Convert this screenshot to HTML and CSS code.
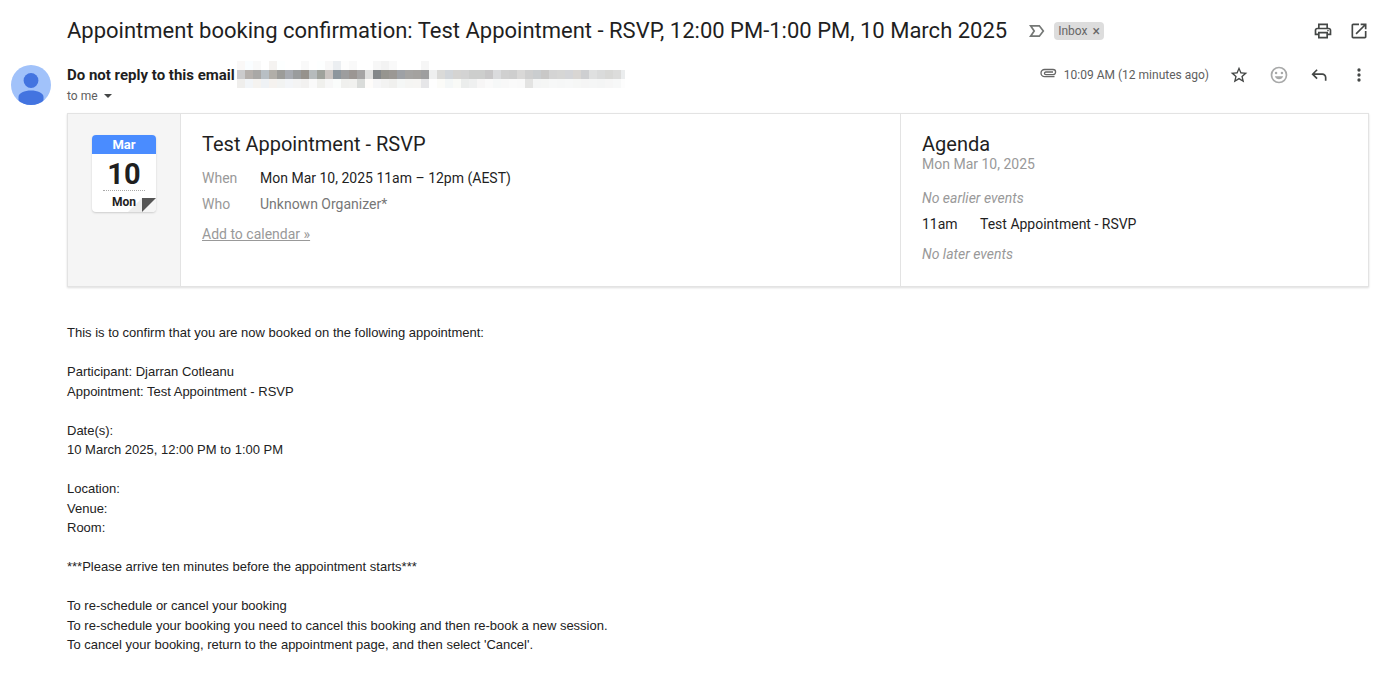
FILE: index.html
```html
<!DOCTYPE html>
<html lang="en">
<head>
    <meta charset="UTF-8">
    <meta name="viewport" content="width=device-width, initial-scale=1.0">
    <title>Appointment booking confirmation</title>
    <link rel="stylesheet" href="styles.css">
</head>
<body>
    <header class="subject-bar">
        <h1>Appointment booking confirmation: Test Appointment - RSVP, 12:00 PM-1:00 PM, 10 March 2025</h1>
        <button class="icon-btn importance" aria-label="Importance marker">
            <svg width="16" height="14" viewBox="0 0 16 14" fill="none" stroke="#747775" stroke-width="1.7">
                <path d="M1.6 1.8h8.7L14.3 7l-4 5.2H1.6L5.2 7z"/>
            </svg>
        </button>
        <span class="label">Inbox <button class="label-remove" aria-label="Remove label">×</button></span>
        <div class="subject-actions">
            <button class="icon-btn" aria-label="Print all">
                <svg width="20" height="20" viewBox="0 0 24 24" fill="#444746">
                    <path d="M19 8h-1V3H6v5H5c-1.66 0-3 1.34-3 3v6h4v4h12v-4h4v-6c0-1.66-1.34-3-3-3zM8 5h8v3H8V5zm8 14H8v-4h8v4zm2-4v-2H6v2H4v-4c0-.55.45-1 1-1h14c.55 0 1 .45 1 1v4h-2z"/>
                    <circle cx="18" cy="11.5" r="1"/>
                </svg>
            </button>
            <button class="icon-btn" aria-label="In new window">
                <svg width="20" height="20" viewBox="0 0 24 24" fill="#444746">
                    <path d="M19 19H5V5h7V3H5c-1.11 0-2 .9-2 2v14c0 1.1.89 2 2 2h14c1.1 0 2-.9 2-2v-7h-2v7zM14 3v2h3.59l-9.83 9.83 1.41 1.41L19 6.41V10h2V3h-7z"/>
                </svg>
            </button>
        </div>
    </header>

    <section class="sender-bar">
        <svg class="avatar" width="40" height="40" viewBox="0 0 40 40">
            <defs>
                <clipPath id="avatar-clip"><circle cx="20" cy="20" r="20"/></clipPath>
            </defs>
            <g clip-path="url(#avatar-clip)">
                <rect width="40" height="40" fill="#a1c2fa"/>
                <circle cx="20" cy="15.5" r="7.4" fill="#4374e0"/>
                <path d="M7.5 42V32c0-4 6-6.500 12.500-6.500S32.500 28 32.500 32v10z" fill="#4374e0"/>
            </g>
        </svg>
        <div class="sender">
            <div class="sender-name">
                <strong>Do not reply to this email</strong>
                <svg id="redacted" width="388" height="27" viewBox="0 0 388 27" shape-rendering="crispEdges" aria-hidden="true"></svg>
            </div>
            <button class="recipient">to me
                <svg width="8" height="4" viewBox="0 0 8 4" fill="#444746"><path d="M0 0h8L4 4z"/></svg>
            </button>
        </div>
        <div class="message-actions">
            <svg class="clip" width="18" height="12" viewBox="0 0 18 12" fill="none" stroke="#666666" stroke-width="1.3">
                <path d="M15.500 8.700H5.600a3.600 3.600 0 0 1 0-7.200H14a2.600 2.600 0 0 1 0 5.200H6.800a1.300 1.300 0 0 1 0-2.700H14"/>
            </svg>
            <time>10:09 AM (12 minutes ago)</time>
            <button class="icon-btn" aria-label="Star">
                <svg width="20" height="20" viewBox="0 0 24 24" fill="#444746">
                    <path d="M22 9.240l-7.190-.62L12 2 9.190 8.630 2 9.240l5.460 4.730L5.820 21 12 17.270 18.180 21l-1.630-7.030L22 9.240zM12 15.400l-3.760 2.270 1-4.280-3.320-2.880 4.380-.38L12 6.100l1.710 4.040 4.380.38-3.320 2.880 1 4.280L12 15.400z"/>
                </svg>
            </button>
            <button class="icon-btn" aria-label="Add reaction">
                <svg width="20" height="20" viewBox="0 0 24 24" fill="#a8a9a9">
                    <path d="M12 2a10 10 0 1 0 0 20 10 10 0 0 0 0-20zm0 18a8 8 0 1 1 0-16 8 8 0 0 1 0 16z"/>
                    <circle cx="8.500" cy="9.500" r="1.500"/>
                    <circle cx="15.500" cy="9.500" r="1.500"/>
                    <path d="M7 13.500h10a5.300 5.300 0 0 1-10 0z"/>
                </svg>
            </button>
            <button class="icon-btn" aria-label="Reply">
                <svg width="20" height="20" viewBox="0 0 24 24" fill="#444746">
                    <path d="M19 19v-4c0-1.650-1.350-3-3-3H6.830l3.580 3.590L9 17l-6-6 6-6 1.410 1.410L6.830 10H16c2.760 0 5 2.240 5 5v4h-2z"/>
                </svg>
            </button>
            <button class="icon-btn" aria-label="More">
                <svg width="20" height="20" viewBox="0 0 24 24" fill="#444746">
                    <circle cx="12" cy="6" r="2"/><circle cx="12" cy="12" r="2"/><circle cx="12" cy="18" r="2"/>
                </svg>
            </button>
        </div>
    </section>

    <section class="event-card">
        <div class="event-date">
            <div class="calendar">
                <div class="month">Mar</div>
                <div class="day">10</div>
                <div class="weekday">Mon</div>
                <svg class="fold" width="28" height="14" viewBox="0 0 28 14">
                    <path d="M0 14L14 0v14z" fill="#eeeeee"/>
                    <path d="M14 14L28 0v14z" fill="#f5f5f5"/>
                    <path d="M14 0h14L14 14z" fill="#555555"/>
                </svg>
            </div>
        </div>
        <div class="event-info">
            <h2>Test Appointment - RSVP</h2>
            <dl>
                <dt>When</dt>
                <dd>Mon Mar 10, 2025 11am – 12pm (AEST)</dd>
                <dt>Who</dt>
                <dd class="organizer">Unknown Organizer*</dd>
            </dl>
            <a href="#">Add to calendar »</a>
        </div>
        <div class="agenda">
            <h2>Agenda</h2>
            <p class="agenda-date">Mon Mar 10, 2025</p>
            <p class="no-events">No earlier events</p>
            <p class="agenda-event"><span class="agenda-time">11am</span>Test Appointment - RSVP</p>
            <p class="no-events">No later events</p>
        </div>
    </section>

    <main class="message">
        <p>This is to confirm that you are now booked on the following appointment:</p>
        <p>Participant: Djarran Cotleanu<br>Appointment: Test Appointment - RSVP</p>
        <p>Date(s):<br>10 March 2025, 12:00 PM to 1:00 PM</p>
        <p>Location:<br>Venue:<br>Room:</p>
        <p>***Please arrive ten minutes before the appointment starts***</p>
        <p>To re-schedule or cancel your booking<br>To re-schedule your booking you need to cancel this booking and then re-book a new session.<br>To cancel your booking, return to the appointment page, and then select 'Cancel'.</p>
    </main>

    <script>
        // Mosaic over the sender's address, one colour per 8x9 block
        const rows = [
            "faf8f7 fafdff f9f9f9 ffffff f5f3f1 fdffff ffffff ffffff f9f9f9 ffffff fdffff f8f8f8 ebeef1 fdfdfd f9f9f9 ffffff ffffff f7f7f7 f3f3f3 f9f9f9 ffffff ffffff ffffff f6f6f6",
            "cbcbcc b5b0ac a9a8a6 b8bfc4 b1aea8 9c9c99 a7aab0 9a9c9d 96928c b6bbbc 9fa29c cac4c1 8d969d 9d9d9e 9b9693 a5a4a4 e0e0df 838789 96958f 9b9894 9ea1a5 a5a4a2 a4a29f 9e9e9f eeefef dadad8 d2d6da d5d4d2 d3d3d3 cdcecd cdcecd c8c7c8 dadbdd d0d0d0 cecece d9d8d7 cfcfcf cacdcf c9c8c7 d4d4d4 d6d6d5 d4d5d8 d9d6d3 cecfd1 dfe0e0 dadbdb d8d8d6 dcdcdb ebedee",
            "efeeec f2f5f8 f5f3f0 eff2f5 f5f2ef f2f3f2 f3f5f8 f4f4f4 f2f1f0 fafafa f0f0ed f7f7f7 fafcfb f0f0ee f1f1ef dadcda fefcfa f6f6f7 f3f3f2 f0f0ee f5f7f6 f5f5f3 f6f5f3 e6e6e8 fefefe fbfbf8 f4f7f7 f9faf7 ebedec eff0f0 f7f6f6 fafafa f6f8f8 f8f8f8 fafafa f9f9f9 e3e3e2 f4f5f5 f5f6f5 f7f8f8 f6f7f7 f7f8f8 f6f7f6 f5f5f5 f5f6f6 f4f5f5 f6f6f6 f7f8f8 fdfdfd"
        ];
        const redacted = document.getElementById("redacted");
        rows.forEach((row, y) => {
            row.split(" ").forEach((color, x) => {
                const block = document.createElementNS("http://www.w3.org/2000/svg", "rect");
                block.setAttribute("x", x * 8);
                block.setAttribute("y", y * 9);
                block.setAttribute("width", 8);
                block.setAttribute("height", 9);
                block.setAttribute("fill", "#" + color);
                redacted.appendChild(block);
            });
        });
    </script>
</body>
</html>
```
FILE: styles.css
```css
* {
    box-sizing: border-box;
}
body {
    margin: 0;
    padding: 12px 12px 20px 11px;
    background-color: #ffffff;
    color: #1f1f1f;
    font-family: Roboto, sans-serif;
    font-size: 14px;
}
h1, h2, p, dl, dd {
    margin: 0;
}
h1, h2 {
    font-weight: 400;
}
button {
    padding: 0;
    border: none;
    background: none;
    color: inherit;
    font: inherit;
    cursor: pointer;
}
svg {
    display: block;
    flex-shrink: 0;
}

.icon-btn {
    display: flex;
    align-items: center;
    justify-content: center;
    width: 20px;
    height: 20px;
}

.subject-bar {
    display: flex;
    align-items: center;
    height: 38px;
    padding-left: 56px;
}
.subject-bar h1 {
    font-size: 22px;
    line-height: 28px;
}
.importance {
    margin: 0 7px 0 20px;
}
.label {
    display: flex;
    align-items: center;
    gap: 5px;
    height: 18px;
    padding: 0 4px;
    border-radius: 4px;
    background-color: #dddddd;
    color: #666666;
    font-size: 12px;
}
.label-remove {
    font-size: 14px;
}
.subject-actions {
    display: flex;
    gap: 16px;
    margin-left: auto;
}

.sender-bar {
    display: flex;
    align-items: flex-start;
    height: 63px;
    padding-top: 11px;
}
.avatar {
    margin-top: 4px;
}
.sender {
    flex: 1;
    margin-left: 16px;
}
.sender-name {
    display: flex;
    align-items: center;
    gap: 2px;
    height: 27px;
    font-size: 15px;
}
.recipient {
    display: flex;
    align-items: center;
    gap: 6px;
    color: #5e5e5e;
    font-size: 12px;
    line-height: 16px;
}
.message-actions {
    display: flex;
    align-items: center;
    gap: 20px;
    height: 28px;
    color: #5e5e5e;
    font-size: 12px;
}
.message-actions .clip {
    margin: 0 -13px 2px 0;
}

.event-card {
    display: grid;
    grid-template-columns: 112px 20fr 13fr;
    min-height: 174px;
    margin-left: 56px;
    border: 1px solid #e3e3e3;
    box-shadow: 0 1px 2px #dddddd;
    line-height: 20px;
}
.event-date {
    padding: 21px 24px;
    background-color: #f5f5f5;
}
.calendar {
    position: relative;
    height: 77px;
    border-radius: 4px;
    background-color: #ffffff;
    box-shadow: 0 1px 2px #cccccc;
    font-weight: 700;
    text-align: center;
    overflow: hidden;
}
.fold {
    position: absolute;
    right: 0;
    bottom: 0;
}
.month {
    height: 19px;
    background-color: #4a8cff;
    color: #ffffff;
    font-size: 13px;
}
.day {
    height: 37px;
    margin: 0 11px;
    border-bottom: 1px dotted #aaaaaa;
    font-size: 29px;
    line-height: 40px;
}
.weekday {
    position: relative;
    z-index: 1;
    font-size: 12px;
    line-height: 22px;
}
.event-info, .agenda {
    padding: 20px 21px;
    border-left: 1px solid #e3e3e3;
}
.event-card h2 {
    font-size: 20px;
}
.event-info dl {
    display: grid;
    grid-template-columns: 58px 1fr;
    row-gap: 6px;
    margin: 14px 0 10px;
}
.event-info dt, .event-info a, .agenda-date, .no-events {
    color: #999999;
}
.organizer {
    color: #777777;
}
.no-events {
    font-style: italic;
}
.agenda-date {
    margin-bottom: 14px;
}
.agenda-event {
    display: flex;
    margin: 6px 0 10px;
}
.agenda-time {
    width: 58px;
}

.message {
    margin: 36px 0 0 56px;
    color: #222222;
    font-family: "Liberation Sans", Arial, sans-serif;
    font-size: 13px;
    line-height: 1.5;
}
.message p {
    margin-bottom: 1.5em;
}
```
